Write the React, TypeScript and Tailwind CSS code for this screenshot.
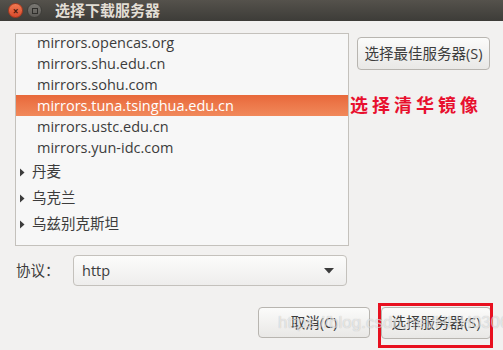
const mirrors = [
  'mirrors.opencas.org',
  'mirrors.shu.edu.cn',
  'mirrors.sohu.com',
  'mirrors.tuna.tsinghua.edu.cn',
  'mirrors.ustc.edu.cn',
  'mirrors.yun-idc.com',
];

const countries = ['丹麦', '乌克兰', '乌兹别克斯坦'];

const font = "font-['Open_Sans','Noto_Sans_CJK_SC',sans-serif]";

function Expander() {
  return (
    <svg width="6" height="9" viewBox="0 0 6 9" className="shrink-0">
      <path d="M1 0.5 L5.5 4.5 L1 8.5 Z" fill="#3c3c3c" />
    </svg>
  );
}

export default function App() {
  return (
    <div className={`relative w-[503px] h-[350px] overflow-hidden flex flex-col bg-[#f2f1f0] text-[#3c3c3c] ${font}`}>
      {/* title bar */}
      <div className="h-[21px] shrink-0 flex items-center bg-gradient-to-b from-[#55524c] to-[#3d3c38]">
        <div className="ml-[8px] w-[15px] h-[15px] rounded-full bg-gradient-to-b from-[#f27a52] to-[#d8492c] border border-[#a8391f] flex items-center justify-center">
          <span className="text-[10px] leading-none font-bold text-[#4a1a0d]">×</span>
        </div>
        <div className="ml-[4px] w-[15px] h-[15px] rounded-full bg-gradient-to-b from-[#7a7873] to-[#5d5b57] border border-[#3e3d39] flex items-center justify-center">
          <div className="w-[6px] h-[6px] border border-[#2f2e2b]" />
        </div>
        <span className="ml-[13px] text-[15px] font-bold text-[#e2ded5] leading-none">选择下载服务器</span>
      </div>

      {/* list + best server button */}
      <div className="flex mt-[12px] ml-[15px]">
        <div className="w-[334px] h-[213px] border border-[#c4c1bc] bg-[#f7f7f7] overflow-hidden flex flex-col">
          <div className="-mt-[2px] flex flex-col">
            {mirrors.map((m, i) => (
              <div
                key={m}
                className={`h-[21px] shrink-0 flex items-center pl-[21px] text-[14.5px] ${
                  i === 3 ? 'bg-gradient-to-b from-[#e8683a] to-[#f1895b] text-white' : ''
                }`}
              >
                {m}
              </div>
            ))}
            <div className="mt-[1px] flex flex-col">
              {countries.map((c) => (
                <div key={c} className="h-[26px] shrink-0 flex items-center pl-[3px] gap-[7px] text-[14.5px]">
                  <Expander />
                  <span>{c}</span>
                </div>
              ))}
            </div>
          </div>
        </div>
        <div className="ml-[8px] mt-[4px]">
          <button className="w-[133px] h-[33px] rounded-[4px] border border-[#b8b5b0] bg-gradient-to-b from-[#fbfbfa] to-[#e9e8e6] text-[14.5px] text-[#3c3c3c]">
            选择最佳服务器(S)
          </button>
        </div>
      </div>

      {/* protocol row */}
      <div className="flex items-center mt-[9px] ml-[16px]">
        <span className="w-[57px] text-[14.5px]">协议：</span>
        <div className="w-[274px] h-[31px] rounded-[4px] border border-[#c4c1bc] bg-gradient-to-b from-[#fcfcfb] to-[#eeedec] flex items-center justify-between pl-[8px] pr-[12px]">
          <span className="text-[14.5px]">http</span>
          <svg width="10" height="6" viewBox="0 0 10 6">
            <path d="M0 0 H10 L5 5.5 Z" fill="#3c3c3c" />
          </svg>
        </div>
      </div>

      {/* bottom buttons */}
      <div className="flex justify-end gap-[11px] mt-[21px] mr-[12px]">
        <button className="w-[112px] h-[31px] rounded-[4px] border border-[#b8b5b0] bg-gradient-to-b from-[#fbfbfa] to-[#e9e8e6] text-[14.5px] text-[#3c3c3c]">
          取消(C)
        </button>
        <button className="w-[110px] h-[32px] rounded-[4px] border border-[#b8b5b0] bg-gradient-to-b from-[#fbfbfa] to-[#e9e8e6] text-[14.5px] text-[#3c3c3c]">
          选择服务器(S)
        </button>
      </div>

      {/* annotations over the screenshot */}
      <div className="absolute left-[350px] top-[93px] h-[22px] flex items-center text-[18px] font-bold tracking-[4px] text-[#e8102e] font-['Noto_Sans_CJK_SC',serif]">
        选择清华镜像
      </div>
      <div className="absolute left-[378px] top-[303px] w-[115px] h-[45px] border-[3px] border-[#e8101f]" />
      <div className="absolute left-[278px] top-[312px] text-[17px] leading-[22px] text-[rgba(255,255,255,0.6)] [text-shadow:0_0_1px_rgba(0,0,0,0.25)] font-['Liberation_Sans',sans-serif] whitespace-nowrap pointer-events-none">
        https://blog.csdn.net/HHH0306
      </div>
    </div>
  );
}
